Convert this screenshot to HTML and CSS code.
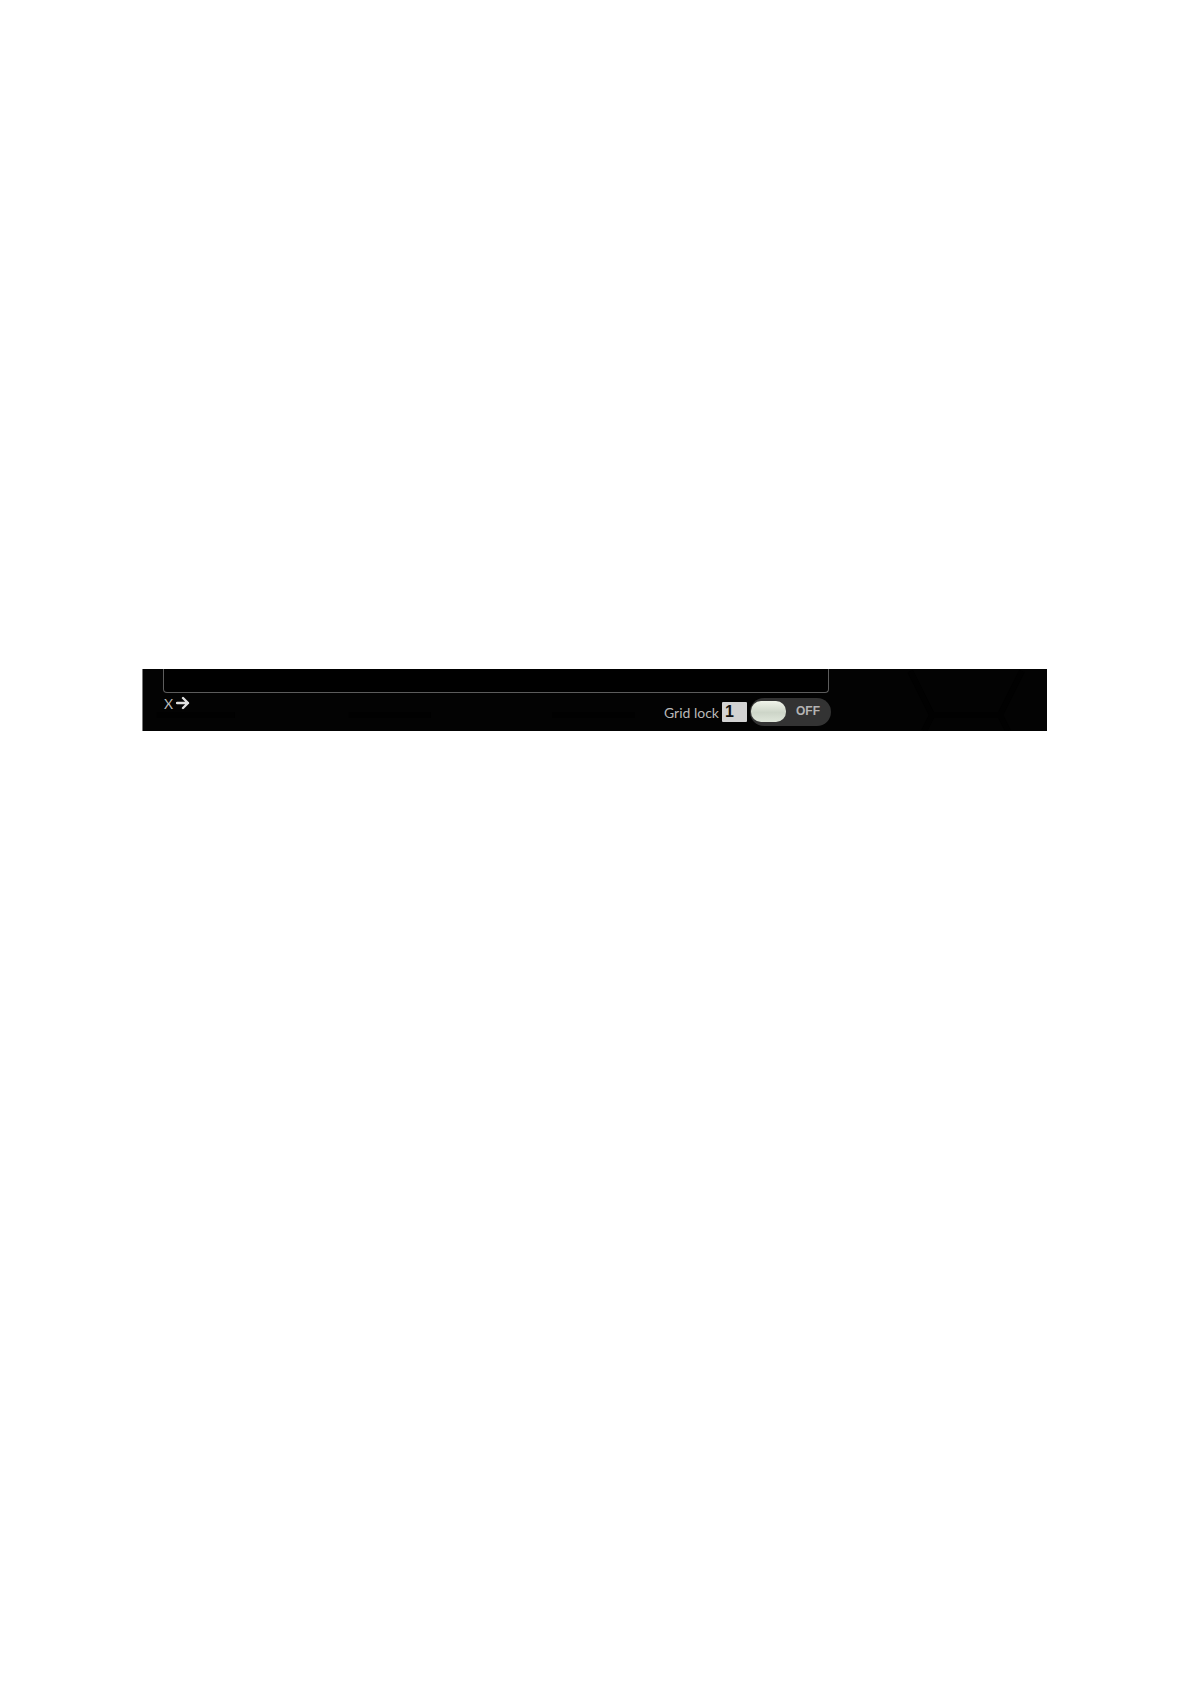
FILE: index.html
```html
<!DOCTYPE html>
<html lang="en">

<head>
    <meta charset="UTF-8">
    <meta name="viewport" content="width=device-width, initial-scale=1.0">
    <title>Grid lock</title>
    <link rel="stylesheet" href="styles.css">
</head>

<body>
    <main class="panel">
        <!-- faint hexagon pattern -->
        <svg class="pattern" viewBox="0 0 905 62" preserveAspectRatio="none" aria-hidden="true">
            <path d="M768 2l22 44h68l22-44M790 46l-8 16M858 46l8 16M14 46h78M206 46h82M410 46h82" />
        </svg>

        <div class="pad"></div>

        <div class="toolbar">
            <div class="axis">
                <span>X</span>
                <svg class="arrow" viewBox="0 0 14 14" aria-hidden="true">
                    <path d="M1 7h11M7 2l5 5-5 5" />
                </svg>
            </div>

            <form class="grid-lock">
                <label for="gridSize">Grid lock</label>
                <input type="text" id="gridSize" class="grid-size" value="1">
                <label class="switch">
                    <input type="checkbox" class="knob">
                    <span>OFF</span>
                </label>
            </form>
        </div>
    </main>
</body>

</html>
```
FILE: styles.css
```css
body {
    margin: 0;
    padding: 669px 144px 0 142px;
    background-color: #fff;
    font-family: Lato, "Liberation Sans", sans-serif;
}

.panel {
    position: relative;
    padding: 0 216px 5px 20px;
    border-left: 1px solid #777;
    background-color: #030303;
    color: #b8b8b8;
}

.pattern {
    position: absolute;
    top: 0;
    left: 0;
    width: 100%;
    height: 100%;
    fill: none;
    stroke: #010101;
    stroke-width: 6;
}

.pad {
    position: relative;
    height: 23px;
    margin-right: 2px;
    border: 1px solid #5c5c5c;
    border-top: none;
    border-radius: 0 0 4px 4px;
    background-color: #000;
}

.toolbar {
    position: relative;
    display: flex;
    justify-content: space-between;
    align-items: flex-start;
    padding-top: 5px;
}

.axis {
    display: flex;
    align-items: center;
    gap: 3px;
    height: 10px;
    padding-left: 1px;
    font-size: 14px;
}

.arrow {
    width: 14px;
    height: 14px;
    fill: none;
    stroke: #e0e0e0;
    stroke-width: 2.4;
    stroke-linecap: round;
    stroke-linejoin: round;
}

.grid-lock {
    display: flex;
    align-items: center;
    gap: 3px;
    font-size: 14px;
}

.grid-size {
    box-sizing: border-box;
    width: 25px;
    height: 20px;
    padding: 0 3px;
    border: none;
    border-radius: 1px;
    background-color: #d2d2d2;
    color: #111;
    font-family: "Liberation Sans", sans-serif;
    font-size: 16px;
    font-weight: bold;
}

.switch {
    display: flex;
    align-items: center;
    gap: 10px;
    box-sizing: border-box;
    width: 81px;
    height: 28px;
    padding: 0 1px 2px;
    border-radius: 14px;
    background-color: #333;
    color: #b4b4b4;
    font-family: "Liberation Sans", sans-serif;
    font-size: 12px;
    font-weight: bold;
    cursor: pointer;
}

.knob {
    appearance: none;
    width: 35px;
    height: 21px;
    margin: 0;
    border-radius: 10px;
    background: linear-gradient(#f0f4ea, #cdd5c8 55%, #dfe6da);
    cursor: pointer;
}
```
